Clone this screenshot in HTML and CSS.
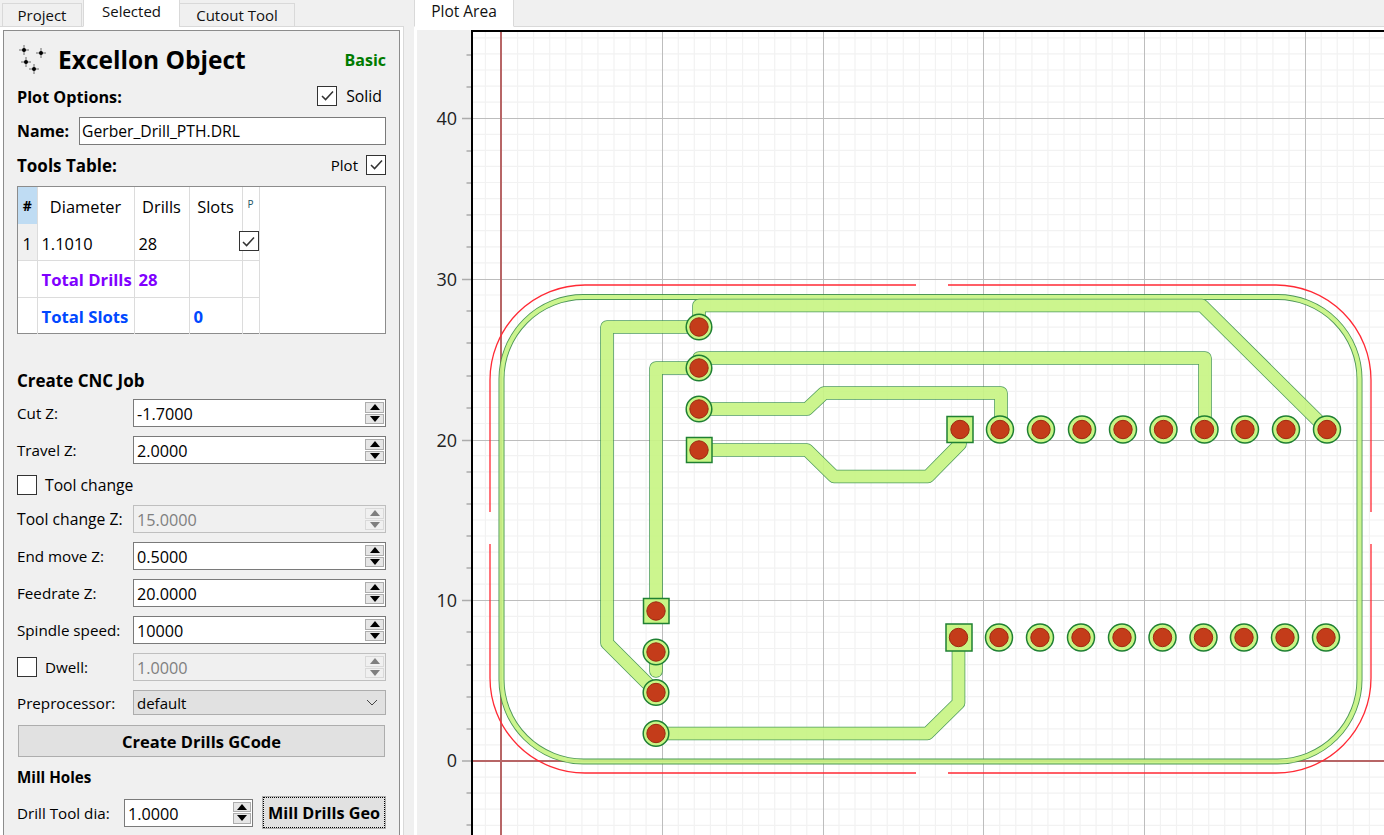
FILE: index.html
```html
<!DOCTYPE html>
<html lang="en">
<head>
<meta charset="utf-8">
<title>Excellon Object</title>
<link rel="stylesheet" href="styles.css">
</head>
<body>
<div class="app">
  <section class="left">
    <div class="tabs">
      <div class="tab tab-project">Project</div>
      <div class="tab tab-active tab-selected">Selected</div>
      <div class="tab tab-cutout">Cutout Tool</div>
    </div>
    <div class="pane">
      <div class="box">
        <div class="title-row">
          <svg class="obj-icon" width="30" height="30" viewBox="0 0 30 30">
            <g class="spark">
              <path d="M2 5h10M7 0v10M19 8h10M24 3v10M4 17h10M9 12v10M12 24h10M17 19v10"/>
            </g>
            <g class="spark-dot">
              <circle cx="7" cy="5" r="2"/><circle cx="24" cy="8" r="2"/><circle cx="9" cy="17" r="2"/><circle cx="17" cy="24" r="2"/>
            </g>
          </svg>
          <h1 class="title">Excellon Object</h1>
          <span class="level">Basic</span>
        </div>
        <div class="row-plot">
          <b class="head-plot">Plot Options:</b>
          <span class="check-label solid">
            <span class="chk"><svg width="17" height="17" viewBox="0 0 17 17"><path d="M3 9l3.600 3.600L14 4.500"/></svg></span>
            <span class="solid-text">Solid</span>
          </span>
        </div>
        <div class="row-name">
          <b class="name-label">Name:</b>
          <span class="field name-field">Gerber_Drill_PTH.DRL</span>
        </div>
        <div class="row-tools">
          <b class="head-tools">Tools Table:</b>
          <span class="check-label">
            <span class="plot-text">Plot</span>
            <span class="chk"><svg width="17" height="17" viewBox="0 0 17 17"><path d="M3 9l3.600 3.600L14 4.500"/></svg></span>
          </span>
        </div>
        <div class="table-box">
          <table class="tools">
            <colgroup><col class="c0"><col class="c1"><col class="c2"><col class="c3"><col class="c4"></colgroup>
            <tr class="r-head">
              <th class="hash">#</th><td class="ctr">Diameter</td><td class="ctr">Drills</td><td class="ctr">Slots</td><td class="ctr tiny">P</td>
            </tr>
            <tr class="r-one">
              <td class="rownum">1</td><td>1.1010</td><td>28</td><td></td>
              <td class="chk-cell"><span class="chk chk-table"><svg width="17" height="17" viewBox="0 0 17 17"><path d="M3 9l3.600 3.600L14 4.500"/></svg></span></td>
            </tr>
            <tr class="r-total drills">
              <td></td><td>Total Drills</td><td>28</td><td></td><td></td>
            </tr>
            <tr class="r-total slots">
              <td></td><td>Total Slots</td><td></td><td>0</td><td></td>
            </tr>
          </table>
        </div>
        <h2 class="section cnc">Create CNC Job</h2>
        <div class="form">
          <div class="row"><span class="lbl">Cut Z:</span><div class="spin"><span class="val">-1.7000</span><span class="btns"><i class="up"></i><i class="dn"></i></span></div></div>
          <div class="row"><span class="lbl">Travel Z:</span><div class="spin"><span class="val">2.0000</span><span class="btns"><i class="up"></i><i class="dn"></i></span></div></div>
          <div class="row row-check"><span class="chk empty"></span><span class="wide">Tool change</span></div>
          <div class="row"><span class="lbl wide">Tool change Z:</span><div class="spin off"><span class="val">15.0000</span><span class="btns"><i class="up"></i><i class="dn"></i></span></div></div>
          <div class="row"><span class="lbl">End move Z:</span><div class="spin"><span class="val">0.5000</span><span class="btns"><i class="up"></i><i class="dn"></i></span></div></div>
          <div class="row"><span class="lbl">Feedrate Z:</span><div class="spin"><span class="val">20.0000</span><span class="btns"><i class="up"></i><i class="dn"></i></span></div></div>
          <div class="row"><span class="lbl">Spindle speed:</span><div class="spin"><span class="val">10000</span><span class="btns"><i class="up"></i><i class="dn"></i></span></div></div>
          <div class="row"><span class="lbl lbl-check"><span class="chk empty"></span><span>Dwell:</span></span><div class="spin off"><span class="val">1.0000</span><span class="btns"><i class="up"></i><i class="dn"></i></span></div></div>
          <div class="row row-select"><span class="lbl">Preprocessor:</span><div class="select"><span>default</span><svg width="12" height="7" viewBox="0 0 12 7"><path d="M1 1l5 5 5-5"/></svg></div></div>
          <div class="big-btn">Create Drills GCode</div>
          <h2 class="section mill">Mill Holes</h2>
          <div class="row row-mill">
            <span class="lbl-mill">Drill Tool dia:</span>
            <div class="spin spin-mill"><span class="val">1.0000</span><span class="btns"><i class="up"></i><i class="dn"></i></span></div>
            <div class="focus-btn">Mill Drills Geo</div>
          </div>
        </div>
      </div>
    </div>
  </section>
  <section class="right">
    <div class="tabs plot-tabs">
      <div class="tab tab-active tab-plot">Plot Area</div>
    </div>
    <div class="plot-pane">
      <svg class="plot" width="967" height="805" viewBox="417 30 967 805">
        <rect class="plot-bg" x="472" y="30" width="912" height="805"/>
        <path class="grid-minor" d="M485.4 32V835M517.6 32V835M533.6 32V835M549.7 32V835M565.8 32V835M581.9 32V835M597.9 32V835M614 32V835M630.1 32V835M646.100 32V835M678.3 32V835M694.3 32V835M710.4 32V835M726.5 32V835M742.6 32V835M758.6 32V835M774.7 32V835M790.8 32V835M806.8 32V835M839 32V835M855 32V835M871.1 32V835M887.2 32V835M903.3 32V835M919.4 32V835M935.4 32V835M951.5 32V835M967.6 32V835M999.7 32V835M1015.8 32V835M1031.9 32V835M1047.9 32V835M1064 32V835M1080.1 32V835M1096.1 32V835M1112.2 32V835M1128.3 32V835M1160.4 32V835M1176.5 32V835M1192.6 32V835M1208.7 32V835M1224.7 32V835M1240.8 32V835M1256.9 32V835M1272.9 32V835M1289 32V835M1321.2 32V835M1337.2 32V835M1353.3 32V835M1369.4 32V835
        M473 825.3H1384M473 809.2H1384M473 793.1H1384M473 777.1H1384M473 744.9H1384M473 728.9H1384M473 712.8H1384M473 696.7H1384M473 680.7H1384M473 664.6H1384M473 648.5H1384M473 632.4H1384M473 616.4H1384M473 584.2H1384M473 568.2H1384M473 552.1H1384M473 536H1384M473 520H1384M473 503.9H1384M473 487.8H1384M473 471.8H1384M473 455.7H1384M473 423.5H1384M473 407.5H1384M473 391.4H1384M473 375.3H1384M473 359.3H1384M473 343.2H1384M473 327.1H1384M473 311H1384M473 295H1384M473 262.8H1384M473 246.8H1384M473 230.7H1384M473 214.6H1384M473 198.6H1384M473 182.5H1384M473 166.4H1384M473 150.4H1384M473 134.3H1384M473 102.1H1384M473 86.1H1384M473 70H1384M473 53.900H1384M473 37.900H1384"/>
        <path class="grid-major" d="M662.5 32V835M823.5 32V835M983.5 32V835M1144.5 32V835M1305.5 32V835M473 118.500H1384M473 279.500H1384M473 440.500H1384M473 600.500H1384"/>
        <path class="ticks" d="M466.500 55H471M466.500 87H471M466.500 151H471M466.500 183H471M466.500 215H471M466.500 247H471M466.500 311H471M466.500 343H471M466.500 376H471M466.500 408H471M466.500 472H471M466.500 504H471M466.500 536H471M466.500 568H471M466.500 632H471M466.500 665H471M466.500 697H471M466.500 729H471M466.500 793H471M466.500 825H471M462 118.500H471M462 279.500H471M462 440.500H471M462 600.500H471M462 761H471"/>
        <path class="frame" d="M472 835V31H1384"/>
        <text class="y-label" x="457" y="125">40</text>
        <text class="y-label" x="457" y="286">30</text>
        <text class="y-label" x="457" y="447">20</text>
        <text class="y-label" x="457" y="607">10</text>
        <text class="y-label" x="457" y="767">0</text>

        <g class="axes">
          <path d="M501 32V835M473 761H1384"/>
        </g>

        <g class="board">
          <rect class="ring-edge" x="501.500" y="297" width="858" height="464.500" rx="82" ry="82"/>
          <rect class="ring-fill" x="501.500" y="297" width="858" height="464.500" rx="82" ry="82"/>
          <g class="trace-edge">
            <path d="M699 327V305.500H1202L1327 429.500"/>
            <path d="M699 327H607V643L656 692"/>
            <path d="M699 368H656V611"/>
            <path d="M699 368V358H1205V429.500"/>
            <path d="M699 409H807L824 393H1001V429.500"/>
            <path d="M699 450H807L834 476.500H928L960 444V429.500"/>
            <path d="M656 652V671"/>
            <path d="M656 733.500H927.500L958.500 703V637"/>
          </g>
          <g class="trace-fill">
            <path d="M699 327V305.500H1202L1327 429.500"/>
            <path d="M699 327H607V643L656 692"/>
            <path d="M699 368H656V611"/>
            <path d="M699 368V358H1205V429.500"/>
            <path d="M699 409H807L824 393H1001V429.500"/>
            <path d="M699 450H807L834 476.500H928L960 444V429.500"/>
            <path d="M656 652V671"/>
            <path d="M656 733.500H927.500L958.500 703V637"/>
          </g>
        </g>

        <path class="cut" d="M490 512V380A95 95 0 0 1 585 285H916M948 285H1276A95 95 0 0 1 1371 380V512M1371 544V678A95 95 0 0 1 1276 773H948M916 773H585A95 95 0 0 1 490 678V544"/>

        <g class="pads">
          <circle cx="699" cy="327" r="12.800"/><circle cx="699" cy="368" r="12.800"/><circle cx="699" cy="409" r="12.800"/>
          <rect x="686.500" y="437.500" width="25.500" height="25"/>
          <rect x="947" y="416.500" width="26" height="26"/>
          <circle cx="1000" cy="429.500" r="13.500"/><circle cx="1041" cy="429.500" r="13.500"/><circle cx="1082" cy="429.500" r="13.500"/><circle cx="1123" cy="429.500" r="13.500"/><circle cx="1163.500" cy="429.500" r="13.500"/><circle cx="1204.500" cy="429.500" r="13.500"/><circle cx="1245" cy="429.500" r="13.500"/><circle cx="1286" cy="429.500" r="13.500"/><circle cx="1327" cy="429.500" r="13.500"/>
          <rect x="643.500" y="598.500" width="25.500" height="25"/>
          <rect x="946" y="624" width="26" height="27"/>
          <circle cx="656" cy="652" r="12.800"/><circle cx="656" cy="692.500" r="12.800"/><circle cx="656" cy="733.500" r="12.800"/>
          <circle cx="999" cy="637.500" r="13.500"/><circle cx="1040" cy="637.500" r="13.500"/><circle cx="1081" cy="637.500" r="13.500"/><circle cx="1122" cy="637.500" r="13.500"/><circle cx="1162.500" cy="637.500" r="13.500"/><circle cx="1203.500" cy="637.500" r="13.500"/><circle cx="1244" cy="637.500" r="13.500"/><circle cx="1285" cy="637.500" r="13.500"/><circle cx="1326" cy="637.500" r="13.500"/>
        </g>
        <g class="drills">
          <circle cx="699" cy="327" r="9.200"/><circle cx="699" cy="368" r="9.200"/><circle cx="699" cy="409" r="9.200"/><circle cx="699" cy="450" r="9.200"/>
          <circle cx="960" cy="429.500" r="9.200"/><circle cx="1000" cy="429.500" r="9.200"/><circle cx="1041" cy="429.500" r="9.200"/><circle cx="1082" cy="429.500" r="9.200"/><circle cx="1123" cy="429.500" r="9.200"/><circle cx="1163.500" cy="429.500" r="9.200"/><circle cx="1204.500" cy="429.500" r="9.200"/><circle cx="1245" cy="429.500" r="9.200"/><circle cx="1286" cy="429.500" r="9.200"/><circle cx="1327" cy="429.500" r="9.200"/>
          <circle cx="656" cy="611" r="9.200"/><circle cx="656" cy="652" r="9.200"/><circle cx="656" cy="692.500" r="9.200"/><circle cx="656" cy="733.500" r="9.200"/>
          <circle cx="958.500" cy="637.500" r="9.200"/><circle cx="999" cy="637.500" r="9.200"/><circle cx="1040" cy="637.500" r="9.200"/><circle cx="1081" cy="637.500" r="9.200"/><circle cx="1122" cy="637.500" r="9.200"/><circle cx="1162.500" cy="637.500" r="9.200"/><circle cx="1203.500" cy="637.500" r="9.200"/><circle cx="1244" cy="637.500" r="9.200"/><circle cx="1285" cy="637.500" r="9.200"/><circle cx="1326" cy="637.500" r="9.200"/>
        </g>
      </svg>
    </div>
  </section>
</div>
</body>
</html>
```
FILE: styles.css
```css
* { box-sizing: border-box; }
html, body { margin: 0; padding: 0; height: 100%; overflow: hidden; }
body {
  background: #f0f0f0;
  color: #000;
  font-family: "Open Sans", "Noto Sans", "Liberation Sans", sans-serif;
  font-size: 15.200px;
}
.app { display: flex; width: 1384px; height: 835px; }

/* Tabs */
.tabs { display: flex; align-items: flex-end; height: 27px; border-bottom: 1px solid #d9d9d9; }
.left { width: 414px; flex: none; }
.left .tabs { padding-left: 2px; width: 404px; }
.tab {
  display: flex; align-items: center; justify-content: center;
  height: 24px; margin-bottom: -1px;
  background: #f0f0f0;
  border: 1px solid #d9d9d9; border-bottom: 1px solid #d9d9d9;
  font-size: 15px; color: #111;
}
.tab-active { height: 28px; background: #fff; border-bottom-color: #fff; padding-bottom: 5px; }
.tab-project { width: 80px; }
.tab-selected { width: 97px; margin-left: 1px; margin-right: -1px; }
.tab-cutout { width: 116px; }
.tab-plot { width: 100px; font-size: 15.500px; padding-bottom: 4px; }

/* Left pane */
.pane {
  width: 404px; height: 808px;
  background: #fff;
  border-right: 1px solid #d9d9d9;
  padding: 3px 3px 0;
}
.box {
  width: 397px; height: 830px;
  background: #f0f0f0;
  border: 1px solid #8c8c8c;
  padding: 0 13px;
}
.title-row { display: flex; align-items: center; height: 55px; padding-top: 3px; position: relative; }
.obj-icon { flex: none; margin: 0 11px 0 0; position: relative; top: 0; }
.spark path { fill: none; stroke: #333; stroke-width: 1; opacity: .7; }
.spark-dot circle { fill: #000; }
.title { margin: 0; flex: 1; font-size: 24.500px; font-weight: 700; line-height: 1; }
.level { color: #007b00; font-weight: 700; font-size: 16px; }

b { font-weight: 700; }
.row-plot, .row-tools { display: flex; justify-content: space-between; align-items: center; height: 19px; }
.row-plot { padding-right: 4px; }
.head-plot { font-size: 16.200px; padding-top: 2px; }
.head-tools { font-size: 17px; padding-top: 2px; }
.check-label { display: flex; align-items: center; }
.solid-text { margin-left: 9px; font-size: 15.800px; padding-top: 1px; }
.plot-text { margin-right: 8px; font-size: 15px; }
.chk {
  display: inline-flex; align-items: center; justify-content: center;
  width: 20px; height: 20px; flex: none;
  background: #fff; border: 1px solid #333;
}
.chk path { fill: none; stroke: #333; stroke-width: 1.500; }

.row-name { display: flex; align-items: center; height: 28px; margin-top: 12px; }
.name-label { width: 62px; flex: none; font-size: 15.900px; }
.field {
  flex: 1; height: 28px; display: flex; align-items: center;
  background: #fff; border: 1px solid #7a7a7a; padding-left: 2px;
  font-size: 15.700px;
}
.row-tools { margin-top: 10px; }

/* Table */
.table-box { height: 148px; margin-top: 12px; background: #fff; border: 1px solid #8c8c8c; }
.tools { border-collapse: collapse; table-layout: fixed; width: 241px; font-size: 16.400px; }
.c0 { width: 19px; } .c1 { width: 97px; } .c2 { width: 55px; } .c3 { width: 53px; } .c4 { width: 17px; }
.tools td, .tools th { padding: 2px 0 0 4px; border-right: 1px solid #dcdcdc; border-bottom: 1px solid #dcdcdc; overflow: visible; white-space: nowrap; }
.r-head td, .r-head th { height: 37px; border-bottom: 0; }
.r-one td { height: 36px; padding-top: 3px; }
.r-total td { height: 37px; font-weight: 700; font-size: 16.700px; }
.tools tr:last-child td { border-bottom: 0; }
.tools .ctr { text-align: center; padding: 2px 0 0; }
.tools .hash { background: #bfdcf3; padding: 0; text-align: center; font-size: 14px; }
.tools .tiny { font-size: 10px; color: #256; padding: 0 0 4px; vertical-align: middle; }
.tools .rownum { background: #f0f0f0; padding: 3px 0 0; text-align: center; }
.tools .chk-cell { padding: 0; position: relative; }
.chk-table { position: absolute; right: 0; top: 7px; }
.drills td { color: #8000ff; }
.slots td { color: #0048ff; }

/* Form */
.section { margin: 0; font-size: 17px; font-weight: 700; display: flex; align-items: center; }
.cnc { height: 19px; margin-top: 37px; }
.form { display: flex; flex-direction: column; gap: 9px; margin-top: 9px; }
.row { display: flex; align-items: center; height: 28px; }
.lbl { width: 116px; flex: none; white-space: nowrap; }
.wide { font-size: 15.700px; }
.lbl-check { display: flex; align-items: center; gap: 8px; }
.row-check { height: 23px; gap: 8px; }
.spin {
  flex: 1; height: 28px; display: flex; align-items: center; justify-content: space-between;
  background: #fff; border: 1px solid #7a7a7a; padding: 2px 1px 2px 3px;
  font-size: 16.200px;
}
.val { padding-top: 2px; }
.btns { display: flex; flex-direction: column; gap: 1px; width: 19px; height: 100%; }
.btns i {
  flex: 1; display: flex; align-items: center; justify-content: center;
  background: #e6e6e6; border: 1px solid #adadad;
}
.btns i::before { content: ""; width: 0; height: 0; border-left: 5.500px solid transparent; border-right: 5.500px solid transparent; }
.btns .up::before { border-bottom: 6px solid #000; }
.btns .dn::before { border-top: 6px solid #000; }
.off { background: #f0f0f0; border-color: #bfbfbf; color: #7f7f7f; }
.off .btns i { background: #f0f0f0; border-color: #d9d9d9; }
.off .btns .up::before { border-bottom-color: #7f7f7f; }
.off .btns .dn::before { border-top-color: #7f7f7f; }
.row-select { height: 25px; }
.select {
  flex: 1; height: 25px; display: flex; align-items: center; justify-content: space-between;
  background: #e1e1e1; border: 1px solid #adadad; padding: 0 7px 0 3px; font-size: 15px;
}
.select path { fill: none; stroke: #444; stroke-width: 1; }
.big-btn {
  height: 32px; margin: 1px 1px 0; display: flex; align-items: center; justify-content: center;
  background: #e1e1e1; border: 1px solid #adadad; font-weight: 700; font-size: 16.500px;
}
.mill { height: 22px; font-size: 15.200px; }
.row-mill { height: 31px; }
.lbl-mill { width: 107px; flex: none; white-space: nowrap; }
.spin-mill { flex: none; width: 129px; margin-right: 10px; }
.spin-mill .btns { width: 18px; }
.focus-btn {
  flex: none; width: 122px; height: 31px; display: flex; align-items: center; justify-content: center;
  background: #e1e1e1; border: 1px dotted #000; outline: 1px solid #adadad; outline-offset: 0;
  font-weight: 700; font-size: 16.200px; white-space: nowrap;
}

/* Right pane */
.right { flex: 1; min-width: 0; }
.plot-tabs { padding-left: 0; }
.plot-pane { background: #fff; height: 808px; padding: 3px 0 0 3px; }
.plot { display: block; background: #f0f0f0; }
.plot-bg { fill: #fff; }
.grid-minor { fill: none; stroke: #f2f2f2; stroke-width: 1.200; }
.grid-major { fill: none; stroke: #bdbdbd; stroke-width: 1; }
.ticks { fill: none; stroke: #ababab; stroke-width: 1.500; }
.frame { fill: none; stroke: #000; stroke-width: 2; }
.y-label { font-family: "Open Sans", sans-serif; font-size: 18px; fill: #222; text-anchor: end; }
.board { opacity: .92; }
.ring-edge { fill: none; stroke: #3f8f4a; stroke-width: 6; }
.ring-fill { fill: none; stroke: #c8f585; stroke-width: 4.200; }
.trace-edge path, .trace-fill path { fill: none; stroke-linejoin: round; stroke-linecap: round; }
.trace-edge path { stroke: #3f9350; stroke-width: 13.600; }
.trace-fill path { stroke: #c8f585; stroke-width: 12.100; }
.axes path { fill: none; stroke: #b76566; stroke-width: 2; }
.cut { fill: none; stroke: #ff2a35; stroke-width: 1.300; }
.pads circle, .pads rect { fill: #c8f585; stroke: #1f8033; stroke-width: 1.500; }
.drills circle { fill: #c43c1a; stroke: #9c2a10; stroke-width: 1; }
```
